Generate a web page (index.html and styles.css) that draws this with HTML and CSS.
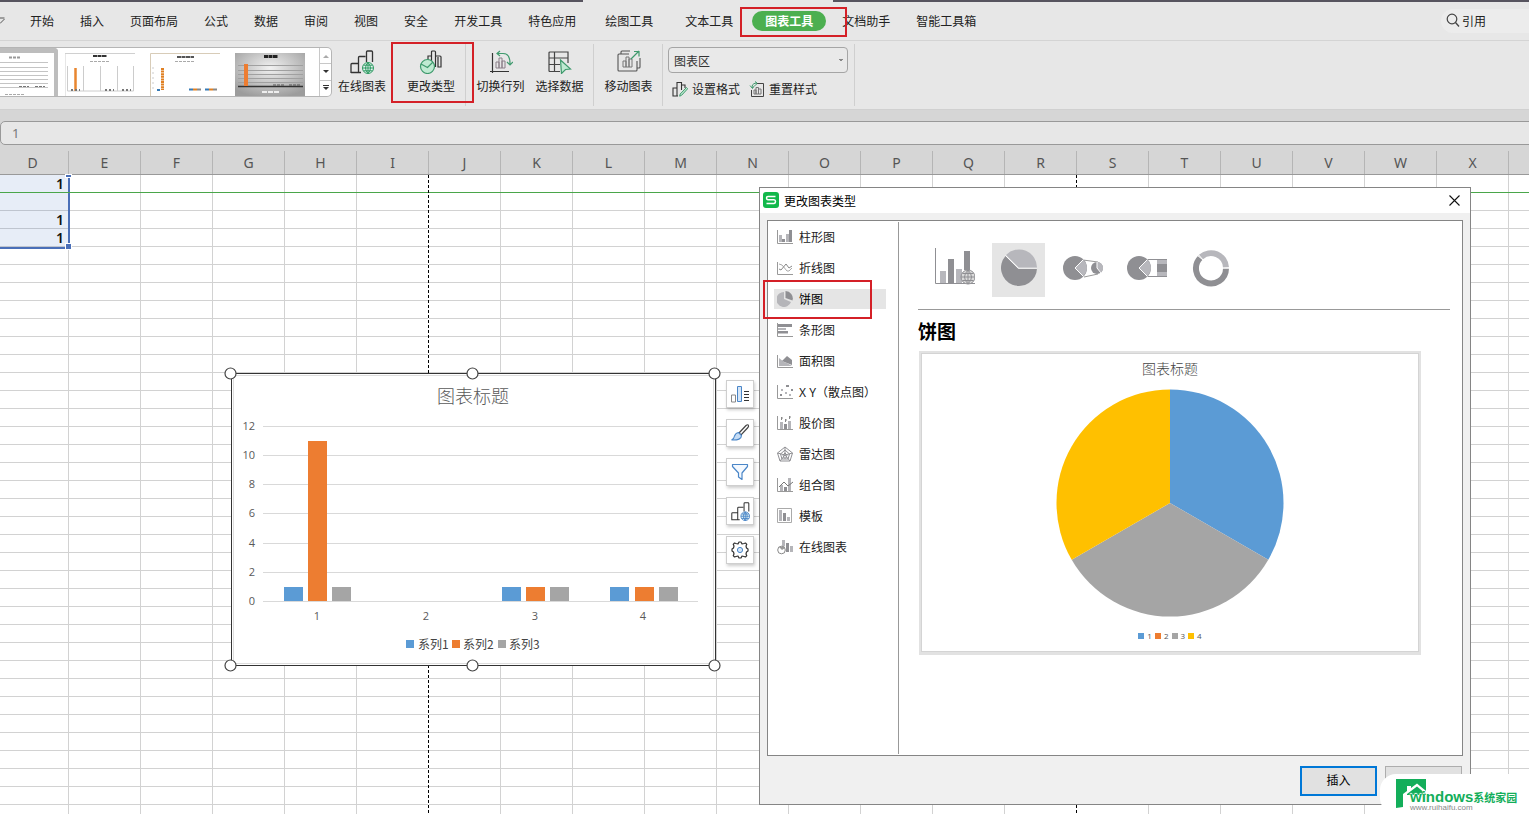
FILE: index.html
```html
<!DOCTYPE html>
<html lang="zh-CN">
<head>
<meta charset="utf-8">
<title>更改图表类型</title>
<link rel="stylesheet" href="styles.css">
</head>
<body>
<svg class="defs" aria-hidden="true">
  <symbol id="bars-globe" viewBox="0 0 24 24">
    <path d="M1 23V14.500q0-1 1-1h6M8.500 23V7.500q0-1 1-1h6M1 22.500h10M8.500 13v9M16.500 12V2q0-1 1-1h4q1 0 1 1v10" fill="none" stroke="#333" stroke-width="1.300"/>
    <circle cx="18" cy="18" r="5.500" class="globe"/>
    <path d="M12.500 18h11M18 12.500v11M13.500 15.200h9M13.500 20.800h9M18 12.500q-5 5.500 0 11M18 12.500q5 5.500 0 11" class="globe-line"/>
  </symbol>
</svg>
<div class="app">
  <div class="titlebar"><span class="titlebar-active"></span></div>
  <nav class="menubar">
    <svg class="menu-caret" width="5" height="8" viewBox="0 0 5 8"><path d="M0 1h4.500M0 6.500L4.500 2" fill="none" stroke="#555"/></svg>
    <button class="tab">开始</button><button class="tab">插入</button><button class="tab">页面布局</button><button class="tab">公式</button><button class="tab">数据</button><button class="tab">审阅</button><button class="tab">视图</button><button class="tab">安全</button><button class="tab">开发工具</button><button class="tab">特色应用</button><button class="tab context">绘图工具</button><button class="tab context">文本工具</button><button class="tab active">图表工具</button><button class="tab">文档助手</button><button class="tab">智能工具箱</button>
    <button class="search"><svg width="14" height="14" viewBox="0 0 14 14"><circle cx="6" cy="6" r="4.800" fill="none" stroke="#444" stroke-width="1.200"/><path d="M9.500 9.500L13 13.500" stroke="#444" stroke-width="1.400"/></svg>引用</button>
  </nav>

  <div class="ribbon">
    <div class="gallery">
      <button class="thumb chosen" aria-label="样式 1"><svg width="54" height="42" viewBox="0 0 54 42">
        <path d="M0 7.500h48M0 12.500h48M0 16.500h48M0 20.500h48M0 24.500h48M0 28.500h48M0 32.500h48" stroke="#c4c4c4"/>
        <path d="M19 31.500h10M35 31.500h10" stroke="#777" stroke-dasharray="3 1"/><path d="M9 2.500h12" stroke="#999" stroke-width="2" stroke-dasharray="3 1"/><path d="M5 39.500h20" stroke="#aaa" stroke-dasharray="3 1"/></svg></button>
      <button class="thumb" aria-label="样式 2"><svg width="70" height="43" viewBox="0 0 70 43">
        <path d="M0 43V.5h70" fill="none" stroke="#d0d0d0"/><path d="M28 3h14" stroke="#333" stroke-width="2" stroke-dasharray="4 .5"/><path d="M25 8.500h20" stroke="#aaa" stroke-dasharray="3 1"/>
        <path d="M2.500 13v25h66V13M18.500 13v25M35.500 13v25M52.500 13v25" fill="none" stroke="#ccc"/><path d="M10.500 15v23" stroke="#e8862f" stroke-width="2.500"/><path d="M6 37h9M40 37h9M57 37h9" stroke="#777" stroke-width="2" stroke-dasharray="2 2"/></svg></button>
      <button class="thumb" aria-label="样式 3"><svg width="70" height="43" viewBox="0 0 70 43">
        <path d="M.5 43V.5H70" fill="none" stroke="#d8ccb8"/><path d="M27 4h17" stroke="#555" stroke-width="2" stroke-dasharray="4 .5"/><path d="M25 8.500h20" stroke="#aaa" stroke-dasharray="3 1"/>
        <path d="M12.500 15v22" stroke="#e08023" stroke-width="3" stroke-dasharray="2 .6"/><path d="M7 37h3M39 36.500h4M55 36.500h4" stroke="#377ab5" stroke-width="2"/><path d="M43 36.500h4M59 36.500h4" stroke="#e08023" stroke-width="2"/><path d="M47 36.500h4M63 36.500h4" stroke="#888" stroke-width="2"/><path d="M3 14v24" stroke="#ccc" stroke-dasharray="2 3"/></svg></button>
      <button class="thumb" aria-label="样式 4"><svg width="70" height="43" viewBox="0 0 70 43">
        <defs><radialGradient id="tg" cx=".5" cy=".35" r=".7"><stop offset="0" stop-color="#f2f2f2"/><stop offset="1" stop-color="#9c9c9c"/></radialGradient></defs>
        <path fill="url(#tg)" d="M0 0h70v43H0z"/><path d="M29 3.500h14" stroke="#222" stroke-width="3" stroke-dasharray="4 .5"/>
        <path d="M3 12.500h65M3 17.500h65M3 21.500h65M3 25.500h65M3 29.500h65" stroke="#a0a0a0"/><path d="M3 33.500h65" stroke="#333" stroke-width="1.500"/><path d="M9 11h4v22H9z" fill="#ed7d31"/><path d="M38 32h12M54 32h12" stroke="#555" stroke-dasharray="3 1"/><path d="M27 39h18" stroke="#eee" stroke-width="2" stroke-dasharray="5 1"/></svg></button>
      <div class="gallery-scroll">
        <button aria-label="上"><svg width="6" height="4" viewBox="0 0 6 4"><path d="M0 4l3-3 3 3z" fill="#aaa"/></svg></button>
        <button aria-label="下"><svg width="6" height="4" viewBox="0 0 6 4"><path d="M0 0l3 3 3-3z" fill="#333"/></svg></button>
        <button aria-label="更多"><svg width="6" height="6" viewBox="0 0 6 6"><path d="M0 .5h6" stroke="#333"/><path d="M0 2l3 3 3-3z" fill="#333"/></svg></button>
      </div>
    </div>
    <button class="tool first"><svg class="green" width="24" height="24"><use href="#bars-globe"/></svg>在线图表</button>
    <button class="tool wide"><svg width="24" height="24" viewBox="0 0 24 24"><path d="M9 10V6h3.500M12.500 17V2q0-1 1-1h2q1 0 1 1v15M16.500 6H21q1 0 1 1v10h-3V7" fill="none" stroke="#333" stroke-width="1.200"/><circle cx="8.500" cy="16.500" r="7" fill="#bfead2" stroke="#3f9a6d" stroke-width="1.200"/><path d="M2 14l6.500 3.500L14 12" fill="none" stroke="#3f9a6d" stroke-width="1.200"/></svg>更改类型</button>
    <span class="rule"></span>
    <button class="tool"><svg width="24" height="24" viewBox="0 0 24 24"><path d="M3.500 3v18.500H20M1 21.500h2.500V23" fill="none" stroke="#333" stroke-width="1.200"/><path d="M7 18V12h3v6zM10 18V8h3v10zM13 18v-7h3v7z" fill="none" stroke="#8a7f88"/><path d="M11 1L8 3.500 11 6M8 3.500h6q7 0 7 10v1M18 12l3 3 3-3" fill="none" stroke="#3f9a6d" stroke-width="1.200"/></svg>切换行列</button>
    <button class="tool"><svg width="24" height="24" viewBox="0 0 24 24"><path d="M12 21.500H2q-1 0-1-1V3q0-1 1-1h18v11M1 8h19M1 14.500h11M6.500 2v19" fill="none" stroke="#444" stroke-width="1.200"/><path d="M12.500 10l10 9-5 .5-4 4z" fill="#bfead2" stroke="#3f9a6d" stroke-width="1.200"/></svg>选择数据</button>
    <span class="rule"></span>
    <button class="tool"><svg width="24" height="24" viewBox="0 0 24 24"><path d="M12 4H2q-1 0-1 1v15q0 1 1 1h17q1 0 1-1v-9M4 4V2q0-1 1-1h8M20 18h2q1 0 1-1V8" fill="none" stroke="#555" stroke-width="1.100"/><path d="M6 17v-6h3v6zM9 17V7h3v10zM12 17V9h3v8z" fill="none" stroke="#777"/><path d="M14 9l8-8M17 1.500h5v5" fill="none" stroke="#3f9a6d" stroke-width="1.200"/></svg>移动图表</button>
    <span class="rule"></span>
    <div class="format">
      <select aria-label="图表元素"><option>图表区</option></select>
      <div class="format-row">
        <button><svg width="16" height="16" viewBox="0 0 16 16"><path d="M1 15V7h4v8zM5 12V1.500h4.500V9M9.500 4H13v3M1 15h5" fill="none" stroke="#333" stroke-width="1.100"/><path d="M14.500 6.500l1.200 1.200-6 6.500-2 1 .5-2.200z" fill="#bfead2" stroke="#3f9a6d"/></svg>设置格式</button>
        <button><svg width="16" height="16" viewBox="0 0 16 16"><path d="M8 2.500h6.500v13H2.500V9" fill="none" stroke="#444"/><path d="M5 13V9h2v4zM7 13V6.500h2.500V13zM9.500 13V8H12v5z" fill="none" stroke="#777"/><path d="M3.500 7Q2 3 7 2M6 .5L8 2 6.500 4.500M1 4.500l2.500 3 2-3" fill="none" stroke="#3f9a6d"/></svg>重置样式</button>
      </div>
    </div>
    <span class="rule end-rule"></span>
  </div>

  <div class="formula"><input aria-label="编辑栏" value="1"></div>
  <div class="columns"><span>D</span><span>E</span><span>F</span><span>G</span><span>H</span><span>I</span><span>J</span><span>K</span><span>L</span><span>M</span><span>N</span><span>O</span><span>P</span><span>Q</span><span>R</span><span>S</span><span>T</span><span>U</span><span>V</span><span>W</span><span>X</span><span></span></div>

  <main class="sheet">
    <table class="cells"><tbody><tr><td>1</td></tr><tr><td></td></tr><tr><td>1</td></tr><tr><td>1</td></tr></tbody></table>
    <div class="freeze"></div>
    <div class="pagebreak one"></div><div class="pagebreak two"></div>
    <i class="grip top"></i><i class="grip bottom"></i>

    <svg class="chart" width="498" height="306" viewBox="224 366 498 306">
      <rect x="231.500" y="373.500" width="484" height="292" fill="#fff" stroke="#333" stroke-width="1"/>
      <path d="M233 375.500h481M233.500 375v289M713.500 375v289M233 663.500h481" stroke="#ddd" fill="none"/>
      <text x="473" y="403" class="c-title">图表标题</text>
      <path d="M263 426.500h435M263 455.500h435M263 484.500h435M263 513.500h435M263 543.500h435M263 572.500h435M263 601.500h435" stroke="#d9d9d9"/>
      <g class="axis end"><text x="255" y="430">12</text><text x="255" y="459">10</text><text x="255" y="488">8</text><text x="255" y="517">6</text><text x="255" y="547">4</text><text x="255" y="576">2</text><text x="255" y="605">0</text></g>
      <g class="axis mid"><text x="317" y="620">1</text><text x="426" y="620">2</text><text x="535" y="620">3</text><text x="643" y="620">4</text></g>
      <path fill="#5b9bd5" d="M284 587h19v14h-19zM502 587h19v14h-19zM610 587h19v14h-19zM406 640h8v8h-8z"/>
      <path fill="#ed7d31" d="M308 441h19v160h-19zM526 587h19v14h-19zM635 587h19v14h-19zM452 640h8v8h-8z"/>
      <path fill="#a5a5a5" d="M332 587h19v14h-19zM550 587h19v14h-19zM659 587h19v14h-19zM498 640h8v8h-8z"/>
      <g class="legend"><text x="418" y="649">系列1</text><text x="463" y="649">系列2</text><text x="509" y="649">系列3</text></g>
      <g fill="#fff" stroke="#444" stroke-width="1.200"><circle cx="230.500" cy="373.500" r="5.500"/><circle cx="472.500" cy="373.500" r="5.500"/><circle cx="714.500" cy="373.500" r="5.500"/><circle cx="230.500" cy="665.500" r="5.500"/><circle cx="472.500" cy="665.500" r="5.500"/><circle cx="714.500" cy="665.500" r="5.500"/></g>
    </svg>

    <div class="side">
      <button aria-label="图表元素"><svg width="20" height="20" viewBox="0 0 20 20"><path d="M1.500 11h4v7h-4z" fill="#fff" stroke="#888"/><path d="M7.500 2.500h4v15h-4z" fill="#d6e6f7" stroke="#4a86c8"/><path d="M14 7.500h5M14 10.500h5M14 13.500h5M14 16.500h5" stroke="#333"/></svg></button>
      <button aria-label="图表样式"><svg width="20" height="20" viewBox="0 0 20 20"><path d="M9 10l7-7.500q2-1.500 2.500 0 .5 1-1 2.500L11 12z" fill="#fff" stroke="#444" stroke-width="1.200"/><path d="M8.500 9.500l3 3q0 5-10 4.500 2.500-1 3-4 1-3 4-3.500z" fill="#c5dcf5" stroke="#4a86c8" stroke-width="1.100"/></svg></button>
      <button aria-label="图表筛选器"><svg width="20" height="20" viewBox="0 0 20 20"><path d="M2.500 2.500h15v2L12 11v6.500L8.500 15v-4l-6-6.500z" fill="#f4f9ff" stroke="#4a86c8" stroke-width="1.200" stroke-linejoin="round"/></svg></button>
      <button aria-label="在线图表"><svg class="blue" width="19" height="19"><use href="#bars-globe"/></svg></button>
      <button aria-label="设置"><svg width="20" height="20" viewBox="0 0 20 20"><path d="M8 4l1-2h2l1 2 2-.5 1.500-.5 1.300 1.300L16 6l.5 2 1.500 1v2l-1.500 1-.5 2 .8 1.700-1.300 1.300L14 16.500 12 16l-1 2H9l-1-2-2 .5-1.500.5-1.300-1.300L4 14l-.5-2L2 11V9l1.500-1L4 6l-.8-1.700L4.500 3 6 3.500z" fill="#fff" stroke="#333" stroke-width="1.200" stroke-linejoin="round"/><circle cx="10" cy="10" r="2.600" fill="#d6e6f7" stroke="#4a86c8"/></svg></button>
    </div>
  </main>

  <section class="dialog" role="dialog" aria-label="更改图表类型">
    <header class="dialog-title">
      <svg width="16" height="16" viewBox="0 0 16 16"><rect width="16" height="16" rx="3" fill="#12b84b"/><path d="M12.500 4.500H5Q3.500 4.500 3.500 6T5 7.800h6q1.500 0 1.500 1.800t-1.500 1.900H3.500" fill="none" stroke="#fff" stroke-width="1.500"/></svg>
      <span>更改图表类型</span>
      <button class="close" aria-label="关闭"><svg width="11" height="11" viewBox="0 0 11 11"><path d="M.5.5l10 10M10.500.5l-10 10" stroke="#111" stroke-width="1.100"/></svg></button>
    </header>
    <div class="panel">
      <div class="kinds">
        <button><svg width="16" height="16" viewBox="0 0 16 16"><path d="M.5 1v13.500H16" fill="none" stroke="#999"/><path d="M2 6h3v7H2zM9 5h3v8H9z" fill="#b5b5b9"/><path d="M5 10h3v3H5zM12 1h3v12h-3z" fill="#8f8f93"/></svg>柱形图</button>
        <button><svg width="16" height="16" viewBox="0 0 16 16"><path d="M.5 2v12.500H16" fill="none" stroke="#999"/><path d="M2 4l3 1 5 6h2l3-3" fill="none" stroke="#aaa"/><path d="M2 9l2 1 5-6 3 4 3-2" fill="none" stroke="#888"/></svg>折线图</button>
        <button class="on"><svg width="16" height="16" viewBox="0 0 16 16"><path d="M7 1a7.500 7.500 0 1 0 7 10L7 8z" fill="#b5b5b9"/><path d="M8.500 0a7.500 7.500 0 0 1 7 9.500L8.500 7z" fill="#8f8f93"/></svg>饼图</button>
        <button><svg width="16" height="16" viewBox="0 0 16 16"><path d="M.5 1v13.500H16" fill="none" stroke="#999"/><path d="M1 2h14v3H1z" fill="#8f8f93"/><path d="M1 6h8v2H1z" fill="#b5b5b9"/><path d="M1 9h10v2.500H1z" fill="#8f8f93"/></svg>条形图</button>
        <button><svg width="16" height="16" viewBox="0 0 16 16"><path d="M.5 2v12.500H16" fill="none" stroke="#999"/><path d="M2 13V5l5 4 3 1 5 3z" fill="#b5b5b9"/><path d="M5 8l5-5 5 4v5l-5-2z" fill="#8f8f93"/></svg>面积图</button>
        <button><svg width="16" height="16" viewBox="0 0 16 16"><path d="M.5 1v13.500H16" fill="none" stroke="#999"/><path d="M3 10h2v2H3zM9 1h3v2H9zM14 5h2v2h-2z" fill="#8f8f93"/><path d="M4 5h2v2H4zM8 8h2v2H8zM12 10h2v2h-2z" fill="#b5b5b9"/></svg>X Y（散点图）</button>
        <button><svg width="16" height="16" viewBox="0 0 16 16"><path d="M.5 1v13.500H16" fill="none" stroke="#999"/><path d="M3 7h3v7H3zM11 6h3v8h-3z" fill="#b5b5b9"/><path d="M7 9h3v5H7z" fill="#8f8f93"/><path d="M4.500 2v3M8.500 4v3M12.500 1v3M4 3h2M8 5h2M12 2h2" stroke="#888"/></svg>股价图</button>
        <button><svg width="16" height="16" viewBox="0 0 16 16"><path d="M8 1l7.500 6L13 15H3L.5 7zM8 4l4.500 4L11 13H5L3.500 8zM8 7l2 2-1 3H7L6 9zM8 1v8M.5 7L8 9l7.500-2M3 15l5-6 5 6" fill="none" stroke="#8f8f93"/></svg>雷达图</button>
        <button><svg width="16" height="16" viewBox="0 0 16 16"><path d="M.5 1v13.500H16" fill="none" stroke="#999"/><path d="M3 8h3v6H3zM11 1h3v13h-3z" fill="#b5b5b9"/><path d="M7 10h3v4H7z" fill="#8f8f93"/><path d="M2 10l5-5 4 4 5-4" fill="none" stroke="#777"/></svg>组合图</button>
        <button><svg width="16" height="16" viewBox="0 0 16 16"><path d="M.5.500h14v14H.5z" fill="#fff" stroke="#aaa"/><path d="M2 2h3v11H2zM10 9h3v4h-3z" fill="#b5b5b9"/><path d="M6 5h3v8H6z" fill="#8f8f93"/></svg>模板</button>
        <button><svg width="16" height="16" viewBox="0 0 16 16"><path d="M5 1h3v6H5zM13 7h3v6h-3z" fill="#b5b5b9"/><path d="M9 4h3v9H9z" fill="#8f8f93"/><circle cx="4.500" cy="11" r="3.800" fill="#fff" stroke="#888"/><path d="M2 8l3 3 3-2-1-2z" fill="#999"/></svg>在线图表</button>
      </div>
      <div class="detail">
        <div class="variants">
          <button aria-label="在线图表"><svg width="40" height="40" viewBox="0 0 40 40"><path d="M.5 0v35.500H40" fill="none" stroke="#8f8f93"/><path d="M5 23h6v12H5zM21 21h6v14h-6z" fill="#b7b7bc"/><path d="M13 11h6v24h-6zM29 3h6v19h-6z" fill="#8f8f93"/><circle cx="33" cy="29" r="7" fill="#dadada" stroke="#8f8f93"/><path d="M26 29h14M27.500 25.500h11M27.500 32.500h11M33 22v14M33 22q-7 7 0 14M33 22q7 7 0 14" fill="none" stroke="#8f8f93"/></svg></button>
          <button class="on" aria-label="饼图"><svg width="38" height="38" viewBox="0 0 38 38"><path d="M19 19L6 6a18 18 0 0 1 31 13z" fill="#b7b7bc"/><path d="M18 19.500L5.500 7A18 18 0 1 0 37 19.500z" fill="#8f8f93"/><path d="M5.500 6.500L18.500 19.200H37" fill="none" stroke="#fff"/></svg></button>
          <button aria-label="复合饼图"><svg width="40" height="26" viewBox="0 0 40 26"><path d="M20 5l15 2M21 22l14-3" stroke="#999"/><circle cx="12" cy="13" r="12" fill="#8f8f93"/><path d="M12 13l8-8.500q4 4 4 8.500t-4 8.500z" fill="#b7b7bc"/><path d="M20.500 4.500L12 13l8.500 8.500" fill="none" stroke="#fff"/><circle cx="34" cy="13" r="6" fill="#8f8f93"/><path d="M34 7a6 6 0 0 1 4 10.500L34 13z" fill="#b7b7bc"/><path d="M34 7v6l4 5" fill="none" stroke="#fff"/></svg></button>
          <button aria-label="复合条饼图"><svg width="40" height="26" viewBox="0 0 40 26"><path d="M20 4.500h20M20 21.500h20" stroke="#8f8f93"/><circle cx="12" cy="13" r="12" fill="#8f8f93"/><path d="M12 13l8-8.500q4 4 4 8.500t-4 8.500z" fill="#b7b7bc"/><path d="M20.500 4.500L12 13l8.500 8.500" fill="none" stroke="#fff"/><path d="M30 5h10v16H30z" fill="#b7b7bc"/><path d="M30 9h10v8H30z" fill="#8f8f93"/></svg></button>
          <button aria-label="圆环图"><svg width="38" height="38" viewBox="0 0 38 38"><path d="M9 8a15 15 0 0 1 25 10.500" fill="none" stroke="#b7b7bc" stroke-width="6"/><path d="M34 19.500A15 15 0 1 1 8.500 8.700" fill="none" stroke="#8f8f93" stroke-width="6"/><path d="M5 6l6 5M30 19h8" stroke="#fff"/></svg></button>
        </div>
        <h2>饼图</h2>
        <div class="preview">
          <div class="preview-in">
            <p>图表标题</p>
            <svg class="pie" width="228" height="228" viewBox="-114 -114 228 228"><path fill="#5b9bd5" d="M0 0V-113.500A113.500 113.500 0 0 1 98.300 56.750z"/><path fill="#a5a5a5" d="M0 0L98.300 56.750A113.500 113.500 0 0 1-98.300 56.750z"/><path fill="#ffc000" d="M0 0L-98.300 56.750A113.500 113.500 0 0 1 0-113.500z"/></svg>
            <ul><li class="k1">1</li><li class="k2">2</li><li class="k3">3</li><li class="k4">4</li></ul>
          </div>
        </div>
      </div>
    </div>
    <footer class="dialog-foot"><button class="primary">插入</button><button aria-label="取消"></button></footer>
  </section>

  <div class="mark tab-mark"></div><div class="mark tool-mark"></div><div class="mark kind-mark"></div>

  <div class="brand">
    <svg width="32" height="30" viewBox="0 0 32 30"><path fill="#13ae5a" d="M0 0h30v12L21 4.500 15 9V7h-4v5l-4 3v13l-7 1z"/><path fill="#13ae5a" d="M11 15l10-7.500 9 7.500v1H11z"/></svg>
    <div class="brand-text"><div class="brand-name"><b>windows</b><span>系统家园</span></div><small>www.ruihaifu.com</small></div>
  </div>
</div>
</body>
</html>
```

FILE: styles.css
```css
* { box-sizing: border-box; }
body { margin: 0; font: 12px "Noto Sans CJK SC", sans-serif; color: #222; }
button { font: inherit; color: inherit; border: 0; background: none; padding: 0; }
svg { display: block; flex: none; }
.defs { position: absolute; width: 0; height: 0; }
.green { color: #2f9b62; }
.blue { color: #3f7fc6; }
.globe { fill: #e6f3f2; stroke: currentColor; }
.globe-line { fill: none; stroke: currentColor; }
.app { position: relative; display: flex; flex-direction: column; height: 100vh; overflow: hidden; background: #d6d6d6; }

.titlebar { height: 2px; background: #57545f; display: flex; }
.titlebar-active { margin-left: 583px; width: 250px; background: #e7e7e7; }

.menubar { height: 39px; display: flex; align-items: center; background: #e7e7e7; border-bottom: 1px solid #d4d4d4; white-space: nowrap; }
.menu-caret { margin-right: 12px; }
.tab { padding: 0 13px; line-height: 20px; }
.tab.context { padding: 0 16px; }
.tab.active { margin: 0 3px; background: #4caf50; color: #fff; font-weight: 700; border-radius: 10px; }
.search { margin-left: auto; width: 88px; height: 24px; padding: 0 0 2px 5px; display: flex; align-items: center; gap: 2px; background: #ececec; border-radius: 12px 0 0 12px; }

.ribbon { height: 69px; display: flex; background: #e7e7e7; border-bottom: 1px solid #d0d0d0; white-space: nowrap; }
.gallery { margin-top: 6px; width: 332px; height: 50px; display: flex; background: #fff; border: 1px solid #b5b5b5; border-left: 0; border-radius: 0 5px 5px 0; overflow: hidden; flex: none; }
.thumb { align-self: flex-start; margin: 5px 0 0 15px; }
.thumb.chosen { margin: 0 -8px 0 0; height: 50px; border: solid #bdbdbd; border-width: 5px 4px 0 0; border-radius: 0 4px 0 0; }
.gallery-scroll { margin-left: auto; width: 12px; display: flex; flex-direction: column; border-left: 1px solid #c8c8c8; }
.gallery-scroll button { flex: 1; display: grid; place-items: center; border-bottom: 1px solid #c8c8c8; }
.gallery-scroll button:last-child { border: 0; }
.tool { width: 59px; padding-top: 9px; display: flex; flex-direction: column; align-items: center; gap: 3px; line-height: 18px; flex: none; }
.tool.first { width: 60px; }
.tool.wide { width: 69px; padding-left: 9px; }
.rule { width: 1px; height: 62px; margin: 3px 5px 0 4px; background: #cfcfcf; flex: none; }
.rule.end-rule { margin-left: 0; }
.format { width: 186px; padding-top: 6px; flex: none; }
.format select { appearance: none; width: 180px; height: 26px; padding: 0 5px; border: 1px solid #a5a5a5; border-radius: 4px; font: inherit; color: #333; background: linear-gradient(135deg, #888 50%, transparent 50%) 172px 11px / 3px 3px no-repeat, linear-gradient(225deg, #888 50%, transparent 50%) 169px 11px / 3px 3px no-repeat, #e9e9e9; }
.format-row { display: flex; gap: 9px; padding: 7px 0 0 4px; }
.format-row button { display: flex; align-items: center; gap: 4px; line-height: 18px; }

.formula { padding-top: 11px; }
.formula input { display: block; width: calc(100% + 6px); height: 24px; padding: 0 11px; border: 1px solid #999; border-radius: 5px; background: #e7e7e7; color: #777; font: 13px "Noto Sans", sans-serif; }
.columns { height: 30px; display: flex; align-items: flex-end; margin-left: -3px; border-bottom: 1px solid #999; font: 14px/24px "Noto Sans", sans-serif; color: #555; text-align: center; flex: none; }
.columns span { flex: none; width: 72px; height: 23px; border-right: 1px solid #b5b5b5; }

.sheet { position: relative; flex: 1; background: repeating-linear-gradient(transparent 0 17px, #d2d2d2 17px 18px), repeating-linear-gradient(90deg, transparent 0 71px, #d2d2d2 71px 72px) -3px 0 / 1800px 100%, #fff; }
.cells { width: 70px; border-collapse: collapse; background: rgba(68, 114, 196, .13); border: solid #4a6fb8; border-width: 0 2px 2px 0; font: 600 14px/18px "Noto Sans", sans-serif; color: #111; text-align: right; }
.cells td { height: 18px; padding: 0 4px 0 0; }
.freeze { position: absolute; left: 0; right: 0; top: 17px; height: 1px; background: #4aa64a; }
.pagebreak { position: absolute; top: 0; bottom: 0; width: 1px; background: repeating-linear-gradient(#000 0 3px, #fff 3px 5px); }
.pagebreak.one { left: 428px; }
.pagebreak.two { left: 1076px; }
.grip { position: absolute; left: 65px; width: 7px; height: 7px; background: #4a6fb8; border: 1px solid #fff; }
.grip.top { top: -1px; height: 4px; }
.grip.bottom { top: 68px; }
.chart { position: absolute; left: 224px; top: 191px; }
.c-title { font-size: 18px; font-weight: 300; fill: #595959; text-anchor: middle; }
.axis { font: 11px "Open Sans", sans-serif; fill: #595959; }
.end { text-anchor: end; }
.mid { text-anchor: middle; }
.legend { font-size: 12px; fill: #444; }
.side { position: absolute; left: 726px; top: 205px; display: flex; flex-direction: column; gap: 11px; }
.side button { width: 28px; height: 28px; display: grid; place-items: center; background: #fff; border: 1px solid #cfcfcf; box-shadow: 1px 2px 3px rgba(0, 0, 0, .2); }

.dialog { position: absolute; left: 759px; top: 187px; width: 712px; border: 1px solid #858585; background: #f0f0f0; display: flex; flex-direction: column; }
.dialog-title { height: 25px; padding: 0 10px 1px 3px; display: flex; align-items: center; gap: 5px; background: #fff; color: #000; }
.close { margin-left: auto; }
.panel { margin: 7px 7px 0; min-height: 536px; display: flex; background: #fff; border: 1px solid #858585; }
.kinds { width: 131px; margin: 1px 0; padding: 5px 12px 0 6px; display: flex; flex-direction: column; gap: 11px; border-right: 1px solid #999; font-family: "Noto Sans", "Noto Sans CJK SC", sans-serif; }
.kinds button { height: 20px; padding: 0 0 1px 3px; display: flex; align-items: center; gap: 6px; white-space: nowrap; }
.kinds .on { background: #e5e5e5; color: #000; }
.detail { flex: 1; padding: 22px 12px 0 19px; }
.variants { display: flex; gap: 11px; padding: 0 0 12px 10px; border-bottom: 1px solid #999; }
.variants button { width: 53px; height: 54px; padding-bottom: 4px; display: grid; place-items: center; }
.variants .on { background: #e5e5e5; }
h2 { margin: 6px 0 5px; font-size: 19px; line-height: 30px; color: #000; }
.preview { width: 502px; margin-left: 1px; border: 2px solid #e2e2e2; border-bottom-width: 3px; }
.preview-in { height: 299px; border: 1px solid #d4d4d4; display: flex; flex-direction: column; align-items: center; }
.preview p { margin: 2px 0 9px; font-size: 14px; line-height: 24px; font-weight: 300; color: #444; }
.preview ul { margin: 13px 0 0; padding: 0; display: flex; gap: 3px; list-style: none; font: 8px/12px "Open Sans", sans-serif; color: #555; }
.preview li { display: flex; align-items: center; gap: 3px; }
.preview li::before { content: ""; width: 6px; height: 6px; background: #5b9bd5; }
.preview .k2::before { background: #ed7d31; }
.preview .k3::before { background: #a5a5a5; }
.preview .k4::before { background: #ffc000; }
.dialog-foot { padding: 10px 8px 8px; display: flex; justify-content: flex-end; gap: 8px; }
.dialog-foot button { width: 77px; height: 30px; padding-bottom: 3px; background: #e1e1e1; border: 1px solid #adadad; color: #000; }
.dialog-foot .primary { border: 2px solid #0078d7; }

.mark { position: absolute; border: 2px solid #d42027; pointer-events: none; }
.tab-mark { left: 740px; top: 7px; width: 107px; height: 30px; }
.tool-mark { left: 391px; top: 42px; width: 83px; height: 61px; }
.kind-mark { left: 763px; top: 280px; width: 109px; height: 39px; }
.brand { position: absolute; right: 0; bottom: 0; width: 149px; height: 40px; padding: 5px 0 0 16px; display: flex; background: #fff; border-radius: 16px 0 0 16px; }
.brand-text { margin: 11px 0 0 -18px; position: relative; white-space: nowrap; }
.brand-name { display: flex; align-items: center; height: 14px; color: #13ae5a; font-weight: 700; text-shadow: 0 0 1px #fff, 0 -1px 1px #fff; }
.brand-name b { font: 700 15px/14px "Liberation Sans", sans-serif; }
.brand-name span { font-size: 11px; line-height: 14px; }
.brand small { display: block; font: 8px/8px "Liberation Sans", sans-serif; color: #888; }
```
